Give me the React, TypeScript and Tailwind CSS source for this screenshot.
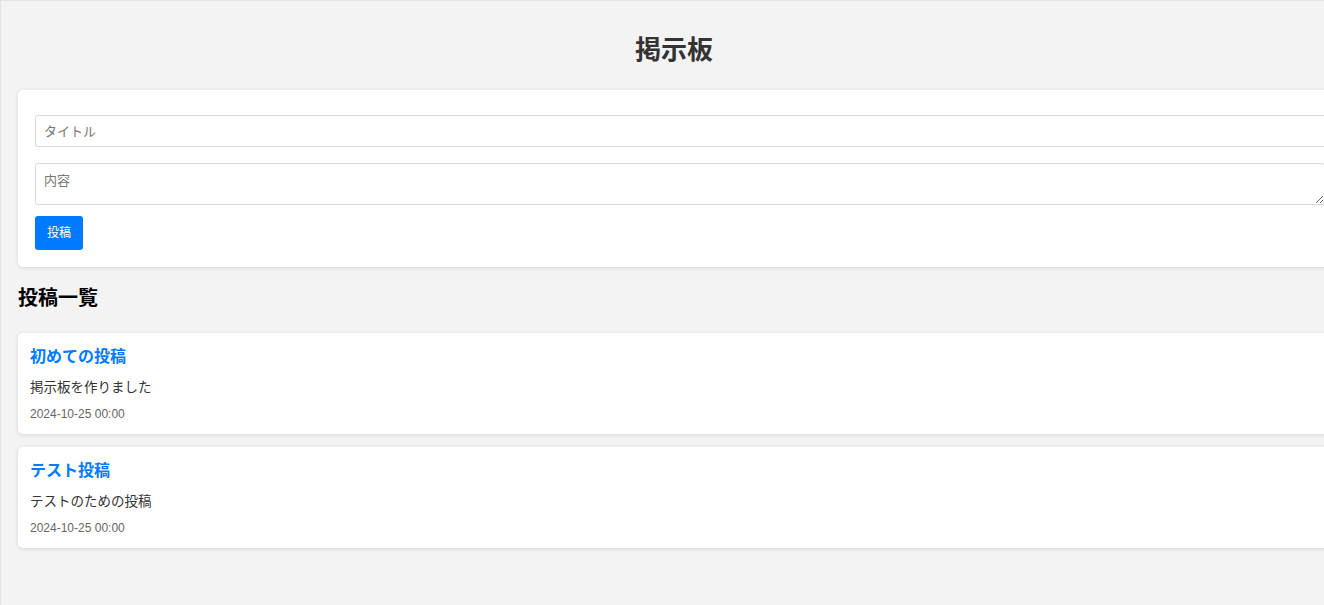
import React from "react";

const posts = [
  { title: "初めての投稿", body: "掲示板を作りました", date: "2024-10-25 00:00" },
  { title: "テスト投稿", body: "テストのための投稿", date: "2024-10-25 00:00" },
];

export default function App() {
  return (
    <div
      className="w-[1324px] h-[605px] overflow-hidden bg-[#f3f3f3] border-l border-t border-[#e4e4e4]"
      style={{ fontFamily: '"Liberation Sans", "Noto Sans CJK JP", sans-serif' }}
    >
      <div className="ml-[17px] w-[1312px]">
        <h1 className="text-center text-[26px] leading-[31px] font-bold text-[#333] pt-[34px] pb-0 m-0">
          掲示板
        </h1>
        <div className="mt-[24px] bg-white rounded-[5px] shadow-[0_1px_4px_rgba(0,0,0,0.12)] pl-[17px] pt-[25px] pb-[17px] h-[177px]">
          <input
            placeholder="タイトル"
            className="block box-border w-[1292px] h-[32px] px-[8px] border border-[#d8d8d8] rounded-[3px] text-[13px] placeholder:text-[#777] outline-none"
          />
          <textarea
            placeholder="内容"
            className="block box-border mt-[16px] w-[1290px] h-[42px] px-[8px] pt-[7px] border border-[#d8d8d8] rounded-[3px] text-[13px] placeholder:text-[#777] outline-none"
          />
          <button className="mt-[11px] w-[48px] h-[34px] bg-[#007bff] text-white text-[12px] rounded-[3px]">
            投稿
          </button>
        </div>
        <h2 className="mt-[19px] text-[20px] leading-[24px] font-bold text-black">投稿一覧</h2>
        <div className="mt-[23px] flex flex-col gap-[13px]">
          {posts.map((p) => (
            <div
              key={p.title}
              className="bg-white rounded-[5px] shadow-[0_1px_4px_rgba(0,0,0,0.12)] pl-[12px] pt-[14px] pb-[11px] h-[101px]"
            >
              <h3 className="text-[16px] leading-[20px] font-bold text-[#007bff]">{p.title}</h3>
              <p className="mt-[10px] text-[13.5px] leading-[21px] text-[#333]">{p.body}</p>
              <p className="mt-[8px] text-[12px] leading-[16px] text-[#666]">{p.date}</p>
            </div>
          ))}
        </div>
      </div>
    </div>
  );
}
